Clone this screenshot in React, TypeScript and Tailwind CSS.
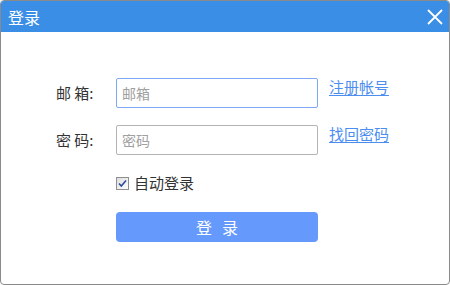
export default function App() {
  return (
    <div className="h-[285px] w-[450px] bg-white font-['Noto_Sans_CJK_SC','Noto_Sans',sans-serif]">
      <div className="flex h-full w-full flex-col overflow-hidden rounded-[4px] border border-[#8a8a8a] bg-white">
        <div className="flex h-[31px] shrink-0 items-center justify-between bg-[#3a8ee6] pl-[7px] pr-[6px]">
          <span className="text-[16px] leading-none text-white">登录</span>
          <svg width="16" height="16" viewBox="0 0 16 16">
            <path d="M1 1L15 15M15 1L1 15" stroke="#fff" strokeWidth="1.8" fill="none" />
          </svg>
        </div>

        <div className="flex flex-col pl-[55px] pt-[46px]">
          <div className="flex items-start">
            <label className="w-[60px] pt-[6px] text-[15px] leading-[18px] text-[#333]">邮 箱:</label>
            <input
              placeholder="邮箱"
              className="h-[30px] w-[202px] rounded-[2px] border border-[#7ea8f6] px-[5px] text-[14px] text-[#333] outline-none placeholder:text-[#a0a0a0]"
            />
            <a className="ml-[11px] mt-[-1px] text-[15px] leading-[20px] text-[#4c8ef0] underline underline-offset-2">
              注册帐号
            </a>
          </div>

          <div className="mt-[17px] flex items-start">
            <label className="w-[60px] pt-[6px] text-[15px] leading-[18px] text-[#333]">密 码:</label>
            <input
              placeholder="密码"
              className="h-[30px] w-[202px] rounded-[2px] border border-[#b4b4b4] px-[5px] text-[14px] text-[#333] outline-none placeholder:text-[#a0a0a0]"
            />
            <a className="ml-[11px] mt-[-1px] text-[15px] leading-[20px] text-[#4c8ef0] underline underline-offset-2">
              找回密码
            </a>
          </div>

          <div className="ml-[60px] mt-[19px] flex h-[18px] items-center gap-[5px]">
            <svg width="13" height="13" viewBox="0 0 13 13">
              <defs>
                <linearGradient id="cb" x1="0" y1="0" x2="1" y2="1">
                  <stop offset="0" stopColor="#dcdcdc" />
                  <stop offset="1" stopColor="#ffffff" />
                </linearGradient>
              </defs>
              <rect x="0.5" y="0.5" width="12" height="12" fill="url(#cb)" stroke="#8e8f8f" />
              <path d="M3 6.5L5.3 9L10 3.5" stroke="#2c4b9a" strokeWidth="1.6" fill="none" />
            </svg>
            <span className="text-[15px] leading-[18px] text-[#333]">自动登录</span>
          </div>

          <button className="ml-[60px] mt-[20px] flex h-[30px] w-[202px] items-center justify-center rounded-[4px] bg-[#6699fc] text-[16px] leading-none tracking-[10px] text-white">
            <span className="ml-[10px]">登录</span>
          </button>
        </div>
      </div>
    </div>
  );
}
